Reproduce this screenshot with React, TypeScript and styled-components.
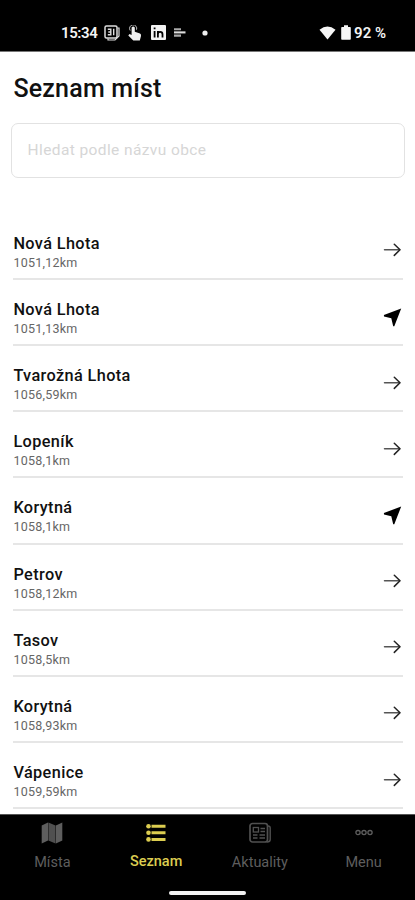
import React from "react";
import styled, { createGlobalStyle } from "styled-components";

const Global = createGlobalStyle`
  * { box-sizing: border-box; }
  body { margin: 0; background: #fff; font-family: Roboto, sans-serif; overflow: hidden; }
`;

const Screen = styled.div`
  display: flex;
  flex-direction: column;
  width: 415px;
  height: 900px;
  background: #fff;
  color: #111;
`;

const StatusBar = styled.header`
  display: flex;
  justify-content: space-between;
  flex: none;
  height: 52px;
  padding: 12px 29px 0 61px;
  background: #000;
  border-bottom: 1px solid #777;
  color: #f4f4f4;
`;

const StatusGroup = styled.div`
  display: flex;
  align-items: center;
  height: 41px;
  svg { display: block; flex: none; }
`;

const StatusText = styled.span<{ $spacing?: number }>`
  font-size: 15px;
  font-weight: 600;
  line-height: 20px;
  white-space: nowrap;
  letter-spacing: ${(p) => p.$spacing ?? 0}px;
`;

const Gap = styled.span<{ $w: number }>`
  flex: none;
  width: ${(p) => p.$w}px;
`;

const Main = styled.main`
  display: flex;
  flex-direction: column;
  flex: 1;
  min-height: 0;
  overflow: hidden;
`;

const Title = styled.h1`
  margin: 21px 0 0 13.4px;
  font-size: 25px;
  font-weight: 500;
  line-height: 32px;
  letter-spacing: 0.2px;
`;

const Search = styled.input`
  flex: none;
  width: 394px;
  height: 55px;
  margin: 18px 0 0 11px;
  padding: 0 15.5px 1px;
  border: 1.5px solid #e2e2e2;
  border-radius: 7px;
  background: #fff;
  font: 400 15.5px Roboto, sans-serif;
  letter-spacing: 0.4px;
  outline: none;
  &::placeholder { color: #d6d6d6; opacity: 1; }
`;

const List = styled.ul`
  margin: 35.9px 12px 0 13px;
  padding: 0;
  list-style: none;
`;

const Row = styled.li`
  display: flex;
  justify-content: space-between;
  height: 66.15px;
  padding-top: 20px;
  border-bottom: 2px solid #e6e6e6;
  svg { display: block; margin-top: 7.5px; }
`;

const Name = styled.div`
  padding-left: 0.4px;
  font-size: 16.3px;
  font-weight: 500;
  line-height: 20px;
  letter-spacing: 0.38px;
`;

const Distance = styled.div`
  padding-left: 0.4px;
  font-size: 12.5px;
  line-height: 18px;
  letter-spacing: 0.25px;
  color: #666;
`;

const TabBar = styled.nav`
  display: grid;
  grid-template-columns: repeat(4, 1fr);
  flex: none;
  height: 74px;
  background: #000;
  border-top: 1px solid #555;
`;

const Tab = styled.a<{ $active?: boolean }>`
  display: flex;
  flex-direction: column;
  align-items: center;
  padding: 7px 0 0 1px;
  color: ${(p) => (p.$active ? "#dccd50" : "#5e5e5e")};
  font-size: 14.5px;
  font-weight: ${(p) => (p.$active ? 500 : 400)};
  line-height: 20px;
  svg { display: block; margin-bottom: ${(p) => (p.$active ? 8 : 9)}px; }
`;

const HomeArea = styled.footer`
  display: flex;
  justify-content: center;
  flex: none;
  height: 12px;
  padding-top: 3px;
  background: #000;
`;

const HomeHandle = styled.div`
  width: 77px;
  height: 4px;
  border-radius: 2px;
  background: #f2f2f2;
`;

const ArrowIcon = () => (
  <svg width="20" height="18" viewBox="0 0 20 18" fill="none" stroke="#222" strokeLinecap="round" strokeLinejoin="round">
    <path d="M1.5 8.8H16.5" stroke="#555" strokeWidth="1.5" />
    <path d="M11.3 3.2L17 8.8L11.3 14.4" strokeWidth="1.5" />
  </svg>
);

const LocationIcon = () => (
  <svg width="20" height="20" viewBox="0 0 20 20" fill="#000">
    <path d="M18.2 .5L.9 7L1 8.4L8.3 10.2L10.2 18.2H11.3Z" />
  </svg>
);

const CalendarIcon = () => (
  <svg width="16" height="16" viewBox="0 0 16 16" fill="none" stroke="#ddd" strokeWidth="1.5">
    <path d="M2.5 1H11.5Q13 1 13 2.5V11.5Q13 13 11.5 13H2.5Q1 13 1 11.5V2.5Q1 1 2.5 1Z" />
    <path d="M3.8 4.3H6.8V9.8H3.8M4.3 7H6.8M9.7 3.7V10.3" strokeWidth="1.4" />
    <path d="M13.5 3H15V11L11 15H4V13.5" strokeWidth="1.2" />
  </svg>
);

const TouchIcon = () => (
  <svg width="14" height="16" viewBox="0 0 14 16" fill="#eee">
    <path d="M3.6 2.6Q5.2.4 6.8 2.6V6.8L12 8.6Q13.4 9.4 13 11L11.8 15.5H5.3L.3 10.4L1.5 9.1L3.6 10Z" />
    <path d="M2.2 5.5A3.6 3.6 0 1 1 8.5 4.7" fill="none" stroke="#bbb" />
  </svg>
);

const LinkedInIcon = () => (
  <svg width="15" height="15" viewBox="0 0 15 15">
    <rect width="15" height="15" rx="1" fill="#f2f2f2" />
    <path d="M3.6 6V12.5M3.6 2.5V4.3M6.9 12.5V6M6.9 12.5V9Q7.1 6.8 9.2 6.8Q11.5 6.8 11.5 9.2V12.5" fill="none" stroke="#000" strokeWidth="1.8" />
  </svg>
);

const LinesIcon = () => (
  <svg width="12" height="9" viewBox="0 0 12 9" fill="none" strokeWidth="2.1">
    <path d="M0 1.2H7M0 7.6H7" stroke="#aaa" />
    <path d="M0 4.4H11.5" stroke="#ddd" />
  </svg>
);

const DotIcon = () => (
  <svg width="6" height="6" viewBox="0 0 6 6"><circle cx="3" cy="3" r="2.6" fill="#eee" /></svg>
);

const WifiIcon = () => (
  <svg width="17" height="14" viewBox="0 0 17 14" fill="#f6f6f6">
    <path d="M.5 3.8Q8.5-2.8 16.5 3.8L8.5 13.6Z" />
  </svg>
);

const BatteryIcon = () => (
  <svg width="10" height="15" viewBox="0 0 10 15" fill="#f6f6f6">
    <path d="M3 .3H7V2H9Q9.8 2 9.8 2.8V14Q9.8 14.7 9 14.7H1Q.2 14.7.2 14V2.8Q.2 2 1 2H3Z" />
  </svg>
);

const MapIcon = () => (
  <svg width="22" height="22" viewBox="0 0 22 22" fill="currentColor">
    <path d="M.7 3.4L7 .6V18.4L.7 21.4Z" />
    <path d="M7.4.6L14.5 3.5V21.4L7.4 18.4Z" opacity=".85" />
    <path d="M14.9 3.5L21.3.6V18.4L14.9 21.4Z" />
  </svg>
);

const ListIcon = () => (
  <svg width="20" height="22" viewBox="0 0 20 22" fill="currentColor">
    <circle cx="2.5" cy="4.2" r="2.3" />
    <circle cx="2.5" cy="10.8" r="2.3" />
    <circle cx="2.5" cy="17.4" r="2.3" />
    <path d="M5.5 2.7H19.5V5.7H5.5ZM5.5 9.3H19.5V12.3H5.5ZM5.5 15.9H19.5V18.9H5.5Z" />
  </svg>
);

const NewsIcon = () => (
  <svg width="22" height="22" viewBox="0 0 22 22" fill="none" stroke="#505050">
    <rect x="1" y="1.5" width="17.5" height="18.5" rx="2.5" strokeWidth="1.7" />
    <path d="M19 4Q21.2 4 21.2 6V17.5Q21.2 20 18 20" strokeWidth="1.4" />
    <rect x="4.3" y="5.5" width="5.2" height="4.5" strokeWidth="1.3" />
    <path d="M11.5 6.5H16M11.5 9.5H16M4 13H8.5M10.5 13H16M4 16H8.5M10.5 16H16" strokeWidth="1.7" />
  </svg>
);

const MoreIcon = () => (
  <svg width="18" height="22" viewBox="0 0 18 22" fill="none" stroke="currentColor" strokeWidth="1.3">
    <circle cx="3" cy="10.6" r="2.1" />
    <circle cx="9" cy="10.6" r="2.1" />
    <circle cx="15" cy="10.6" r="2.1" />
  </svg>
);

const places = [
  { name: "Nová Lhota", distance: "1051,12km" },
  { name: "Nová Lhota", distance: "1051,13km", near: true },
  { name: "Tvarožná Lhota", distance: "1056,59km" },
  { name: "Lopeník", distance: "1058,1km" },
  { name: "Korytná", distance: "1058,1km", near: true },
  { name: "Petrov", distance: "1058,12km" },
  { name: "Tasov", distance: "1058,5km" },
  { name: "Korytná", distance: "1058,93km" },
  { name: "Vápenice", distance: "1059,59km" },
];

export default function App() {
  return (
    <Screen>
      <Global />
      <StatusBar>
        <StatusGroup>
          <StatusText $spacing={-0.4}>15:34</StatusText>
          <Gap $w={7} />
          <CalendarIcon />
          <Gap $w={8} />
          <TouchIcon />
          <Gap $w={9} />
          <LinkedInIcon />
          <Gap $w={8} />
          <LinesIcon />
          <Gap $w={16} />
          <DotIcon />
        </StatusGroup>
        <StatusGroup>
          <WifiIcon />
          <Gap $w={5} />
          <BatteryIcon />
          <Gap $w={3} />
          <StatusText>92 %</StatusText>
        </StatusGroup>
      </StatusBar>
      <Main>
        <Title>Seznam míst</Title>
        <Search placeholder="Hledat podle názvu obce" />
        <List>
          {places.map((place, i) => (
            <Row key={i}>
              <div>
                <Name>{place.name}</Name>
                <Distance>{place.distance}</Distance>
              </div>
              {place.near ? <LocationIcon /> : <ArrowIcon />}
            </Row>
          ))}
        </List>
      </Main>
      <TabBar>
        <Tab><MapIcon />Místa</Tab>
        <Tab $active><ListIcon />Seznam</Tab>
        <Tab><NewsIcon />Aktuality</Tab>
        <Tab><MoreIcon />Menu</Tab>
      </TabBar>
      <HomeArea><HomeHandle /></HomeArea>
    </Screen>
  );
}
